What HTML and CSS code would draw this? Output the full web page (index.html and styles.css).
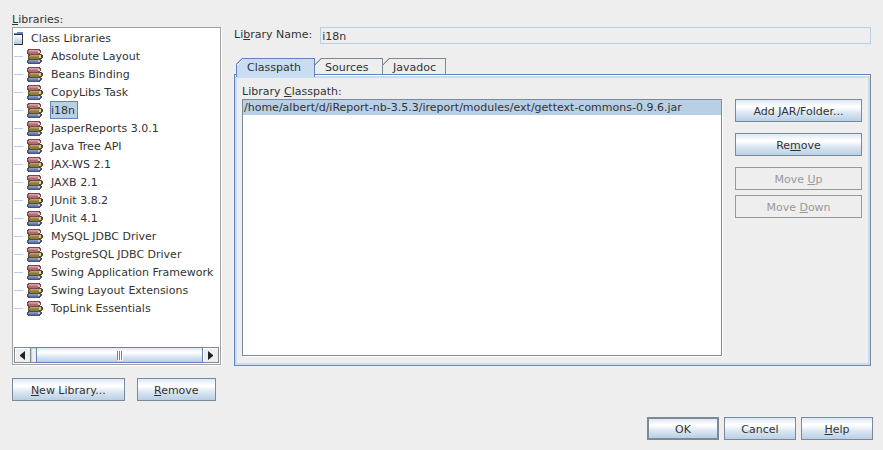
FILE: index.html
```
<!DOCTYPE html>
<html lang="en">
<head>
<meta charset="utf-8">
<meta name="viewport" content="width=device-width, initial-scale=1">
<title>Library Manager</title>
<link rel="stylesheet" href="styles.css">
</head>
<body>

<!-- icons shared by the tree -->
<svg class="defs" width="0" height="0" aria-hidden="true">
	<symbol id="books" viewBox="0 0 16 15" shape-rendering="crispEdges">
		<path d="M1 10h13v1h1v2h-1v1h-1v1H1v-1H0v-3h1z" fill="#46527c"/>
		<path d="M2 11h9v1H2z" fill="#8898c4"/>
		<path d="M1 12h10v1H1z" fill="#7486b6"/>
		<path d="M2 13h10v1H2z" fill="#5c6ea2"/>
		<path d="M11 11h2v2h-2z" fill="#c0c4cc"/>
		<path d="M2 5h13v1h1v3h-1v1h-1v1H2v-1H1V6h1z" fill="#5a4e20"/>
		<path d="M3 6h9v1H3z" fill="#b0a468"/>
		<path d="M2 7h10v1H2z" fill="#9c9050"/>
		<path d="M2 8h10v1H2zM3 9h9v1H3z" fill="#887c3c"/>
		<path d="M12 6h2v3h-2z" fill="#d4caa4"/>
		<path d="M1 0h12v1h1v3h-1v1h-1v1H1V5H0V1h1z" fill="#80444a"/>
		<path d="M2 1h10v1H2z" fill="#d4a4a6"/>
		<path d="M1 2h10v1H1z" fill="#c48c90"/>
		<path d="M1 3h10v1H1zM2 4h9v1H2z" fill="#ac6c70"/>
		<path d="M11 2h2v2h-2z" fill="#dcc8c4"/>
	</symbol>
</svg>

<div class="dialog">
	<div class="content">
		<section class="libraries">
			<div class="caption" id="libraries-label"><u>L</u>ibraries:</div>
			<div class="tree-box">
				<ul class="tree" aria-labelledby="libraries-label">
					<li class="root"><svg width="9" height="13" viewBox="0 0 9 13" shape-rendering="crispEdges"><defs><linearGradient id="folder" x2="0" y2="1"><stop offset="0" stop-color="#fff"/><stop offset="1" stop-color="#b0cce4"/></linearGradient></defs><path d="M0 3h8v9H0z" fill="url(#folder)"/><path d="M0 1h3V0h6v2H0z" fill="#6382bf"/><path d="M0 2h8v1H0zM8 2h1v11H0v-1h8z" fill="#333"/></svg><span>Class Libraries</span></li>
					<li><svg width="16" height="15"><use href="#books"/></svg><span>Absolute Layout</span></li>
					<li><svg width="16" height="15"><use href="#books"/></svg><span>Beans Binding</span></li>
					<li><svg width="16" height="15"><use href="#books"/></svg><span>CopyLibs Task</span></li>
					<li class="selected"><svg width="16" height="15"><use href="#books"/></svg><span>i18n</span></li>
					<li><svg width="16" height="15"><use href="#books"/></svg><span>JasperReports 3.0.1</span></li>
					<li><svg width="16" height="15"><use href="#books"/></svg><span>Java Tree API</span></li>
					<li><svg width="16" height="15"><use href="#books"/></svg><span>JAX-WS 2.1</span></li>
					<li><svg width="16" height="15"><use href="#books"/></svg><span>JAXB 2.1</span></li>
					<li><svg width="16" height="15"><use href="#books"/></svg><span>JUnit 3.8.2</span></li>
					<li><svg width="16" height="15"><use href="#books"/></svg><span>JUnit 4.1</span></li>
					<li><svg width="16" height="15"><use href="#books"/></svg><span>MySQL JDBC Driver</span></li>
					<li><svg width="16" height="15"><use href="#books"/></svg><span>PostgreSQL JDBC Driver</span></li>
					<li><svg width="16" height="15"><use href="#books"/></svg><span>Swing Application Framework</span></li>
					<li><svg width="16" height="15"><use href="#books"/></svg><span>Swing Layout Extensions</span></li>
					<li><svg width="16" height="15"><use href="#books"/></svg><span>TopLink Essentials</span></li>
				</ul>
				<div class="scrollbar">
					<button type="button" class="arrow" aria-label="Scroll left"><svg width="5" height="9" viewBox="0 0 5 9"><path d="M5 0v9L0 5V4z" fill="#222"/></svg></button>
					<div class="track"><div class="thumb"><i></i><i></i><i></i></div></div>
					<button type="button" class="arrow" aria-label="Scroll right"><svg width="5" height="9" viewBox="0 0 5 9"><path d="M0 0v9l5-4V4z" fill="#222"/></svg></button>
				</div>
			</div>
			<div class="library-buttons">
				<button type="button" class="btn new"><span><u>N</u>ew Library...</span></button>
				<button type="button" class="btn"><span><u>R</u>emove</span></button>
			</div>
		</section>

		<section class="details">
			<div class="name-row">
				<label for="name">Li<u>b</u>rary Name:</label>
				<input type="text" id="name" value="i18n" readonly>
			</div>
			<div class="tabs" role="tablist">
				<button type="button" class="tab active" role="tab" aria-selected="true">Classpath</button>
				<button type="button" class="tab sources" role="tab" aria-selected="false">Sources</button>
				<button type="button" class="tab javadoc" role="tab" aria-selected="false">Javadoc</button>
			</div>
			<div class="panel" role="tabpanel">
				<div class="classpath">
					<div class="caption" id="classpath-label">Library <u>C</u>lasspath:</div>
					<ul class="list" aria-labelledby="classpath-label">
						<li>/home/albert/d/iReport-nb-3.5.3/ireport/modules/ext/gettext-commons-0.9.6.jar</li>
					</ul>
				</div>
				<div class="actions">
					<button type="button" class="btn"><span>Add JAR/Folder...</span></button>
					<button type="button" class="btn"><span>Re<u>m</u>ove</span></button>
					<div class="move">
						<button type="button" class="btn" disabled><span>Move <u>U</u>p</span></button>
						<button type="button" class="btn" disabled><span>Move <u>D</u>own</span></button>
					</div>
				</div>
			</div>
		</section>
	</div>

	<div class="footer">
		<button type="button" class="btn default"><span>OK</span></button>
		<button type="button" class="btn"><span>Cancel</span></button>
		<button type="button" class="btn"><span><u>H</u>elp</span></button>
	</div>
</div>

</body>
</html>
```
FILE: styles.css
```
* {
	box-sizing: border-box;
}

body {
	margin: 0;
	background-color: #eeeeee;
}

body, button, input {
	font-family: "DejaVu Sans", sans-serif;
	font-size: 11px;
	line-height: 15px;
	color: #333333;
}

ul {
	list-style: none;
	margin: 0;
	padding: 0;
}

u {
	text-underline-offset: 1px;
	text-decoration-skip-ink: none;
}

svg {
	display: block;
	flex: none;
}

.defs {
	position: absolute;
}

.dialog {
	display: flex;
	flex-direction: column;
	min-height: 100vh;
	padding: 12px 10px 10px 12px;
}

.content {
	display: flex;
	flex: 1;
	gap: 13px;
	padding-right: 2px;
}

.btn {
	height: 23px;
	padding: 2px 0 0;
	border: 1px solid #7a8a99;
	border-radius: 0;
	background: linear-gradient(#dde8f3, #ffffff 30%, #ffffff 35%, #dde8f3 60%, #b8cfe5);
}

.btn:disabled {
	border-color: #999999;
	background: none;
	color: #999999;
}

.btn.default {
	border-width: 2px;
}

/* left side */

.libraries {
	display: flex;
	flex-direction: column;
	flex: none;
	width: 209px;
}

.caption {
	height: 15px;
}

.tree-box {
	display: flex;
	flex-direction: column;
	flex: 1;
	padding: 1px;
	border: 1px solid #a0a0a0;
	background-color: #ffffff;
	box-shadow: 1px 1px #ffffff;
}

.tree {
	flex: 1;
	overflow: hidden;
	padding-right: 2px;
}

.tree li {
	display: flex;
	align-items: center;
	height: 18px;
	overflow: hidden;
	white-space: nowrap;
}

.tree li::before {
	content: "";
	flex: none;
	width: 9px;
	height: 1px;
	margin-right: 4px;
	background-color: #b8cfe5;
}

.tree li.root::before {
	display: none;
}

.tree span {
	padding: 1px 2px 0 0;
	margin-left: 7px;
	border: 1px solid transparent;
}

.tree .selected span {
	border-color: #6382bf;
	background-color: #b8cfe5;
}

.scrollbar {
	display: flex;
	height: 16px;
	border: 1px solid #7a8a99;
}

.arrow {
	display: flex;
	align-items: center;
	justify-content: center;
	width: 15px;
	padding: 0;
	border: 0;
	background-color: #eeeeee;
	box-shadow: inset 1px 1px #ffffff;
}

.track {
	flex: 1;
	padding-left: 5px;
	border-left: 1px solid #7a8a99;
	background-color: #eeeeee;
	box-shadow: inset 1px 1px #b8cfe5;
}

.thumb {
	display: flex;
	align-items: center;
	justify-content: center;
	gap: 1px;
	height: 16px;
	margin-top: -1px;
	border: 1px solid #6382bf;
	background: linear-gradient(#dde8f3, #ffffff 30%, #ffffff 35%, #dde8f3 60%, #b8cfe5);
}

.thumb i {
	width: 1px;
	height: 9px;
	background-color: #6382bf;
	box-shadow: 1px 1px #ffffff;
}

.library-buttons {
	display: flex;
	gap: 12px;
	margin: 13px 5px 16px 0;
}

.library-buttons .btn {
	flex: 79;
}

.library-buttons .new {
	flex: 113;
}

/* right side */

.details {
	display: flex;
	flex-direction: column;
	flex: 1;
	min-width: 0;
	padding: 15px 0 51px;
}

.name-row {
	display: flex;
	gap: 8px;
}

.name-row input {
	flex: 1;
	min-width: 0;
	height: 17px;
	padding: 2px 1px 0;
	border: 1px solid #b8cfe5;
	background-color: #eeeeee;
}

.tabs {
	display: flex;
	margin-top: 14px;
	padding-left: 2px;
}

.tab {
	height: 17px;
	margin-bottom: -1px;
	padding: 1px 0 0 10px;
	border: 1px solid #7a8a99;
	border-width: 1px 1px 0 0;
	border-radius: 0;
	background: linear-gradient(135deg, #7a8a99 5px, transparent 5px) border-box;
	clip-path: polygon(0 6px, 6px 0, 100% 0, 100% 100%, 0 100%);
	text-align: left;
}

.tab.active {
	width: 79px;
	height: 19px;
	margin-bottom: -3px;
	padding-bottom: 2px;
	border-color: #6382bf;
	border-left-width: 1px;
	background: linear-gradient(135deg, #6382bf 5px, #ffffff 5px, #ffffff 6px, #c8ddf2 6px) border-box;
	z-index: 1;
}

.tab.sources {
	width: 68px;
}

.tab.javadoc {
	width: 63px;
}

.panel {
	display: flex;
	flex: 1;
	gap: 13px;
	padding: 7px 5px 6px 7px;
	border: 1px solid #6382bf;
	border-color: #6382bf #7a8a99 #7a8a99 #6382bf;
	box-shadow: inset 0 1px #ffffff, inset 0 3px #c8ddf2, inset 0 0 0 2px #c8ddf2;
}

.classpath {
	display: flex;
	flex-direction: column;
	flex: 1;
	min-width: 0;
	padding-top: 2px;
}

.list {
	flex: 1;
	margin-bottom: 3px;
	border: 1px solid #7a8a99;
	background-color: #ffffff;
	box-shadow: 1px 1px #ffffff;
}

.list li {
	padding: 0 1px;
	overflow: hidden;
	white-space: nowrap;
	background-color: #b8cfe5;
}

.actions {
	display: flex;
	flex-direction: column;
	gap: 11px;
	width: 127px;
	margin-right: 3px;
	padding-top: 17px;
}

.move {
	display: flex;
	flex-direction: column;
	gap: 5px;
}

.footer {
	display: flex;
	justify-content: flex-end;
	gap: 5px;
}

.footer .btn {
	width: 72px;
}
```
